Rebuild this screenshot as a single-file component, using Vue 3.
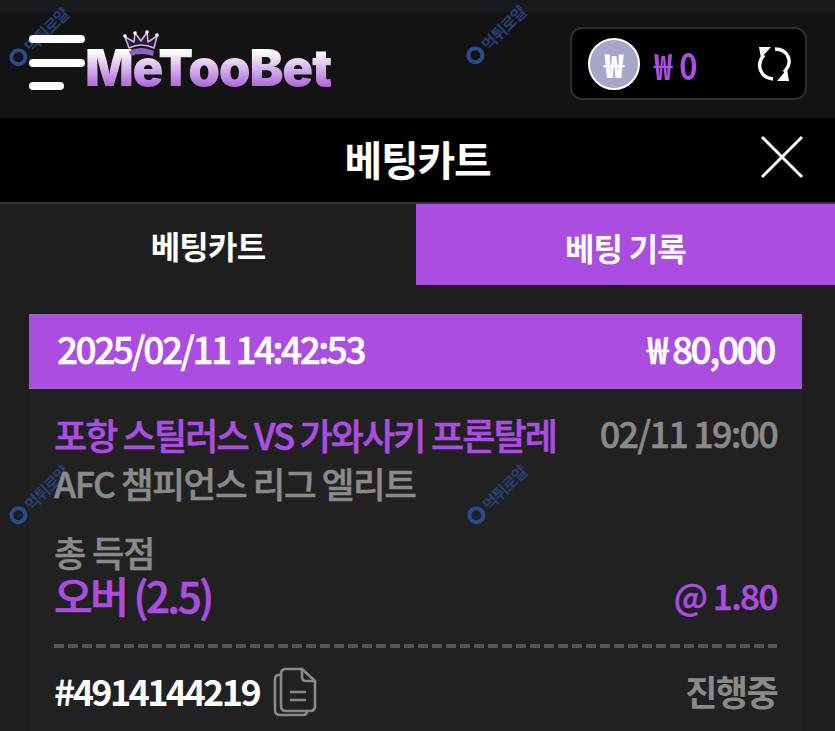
<template>
  <div class="page">
    <div class="topstrip"></div>
    <header class="header">
      <button class="menu" aria-label="menu">
        <span class="line"></span>
        <span class="line"></span>
        <span class="line short"></span>
      </button>
      <div class="logo">
        <svg class="crown" width="36" height="28" viewBox="0 0 36 28">
          <path d="M6 18 L2 7 L11 12 L12 3 L18 11 L24 2 L25 12 L34 6 L31 18 Q18 12 6 18Z" fill="#2a1a35" stroke="#c9b3e6" stroke-width="1.6" stroke-linejoin="round"/>
          <path d="M6 21 Q18 15 31 21 L30 26 Q18 22 8 26Z" fill="#8e5fc0"/>
          <circle cx="2" cy="6" r="1.8" fill="#fff"/>
          <circle cx="12" cy="3" r="1.8" fill="#fff"/>
          <circle cx="24" cy="2" r="1.8" fill="#fff"/>
          <circle cx="34" cy="5" r="1.8" fill="#fff"/>
        </svg>
        <span class="logotext">MeTooBet</span>
      </div>
      <div class="wallet">
        <span class="coin">₩</span>
        <span class="balance">₩ 0</span>
        <svg class="refresh" width="36" height="36" viewBox="0 0 36 36" fill="none" stroke="#fff" stroke-width="3.4">
          <path d="M8 9 C-1 19 5 32 17 33"/>
          <path d="M19 3 C32 3 38 16 28 26"/>
          <path d="M3 1 H15 L5 12Z" fill="#fff" stroke="none"/>
          <path d="M33 35 H21 L31 23Z" fill="#fff" stroke="none"/>
        </svg>
      </div>
    </header>

    <div class="titlebar">
      <span class="title">베팅카트</span>
      <svg class="close" width="44" height="44" viewBox="0 0 44 44" stroke="#fff" stroke-width="3">
        <path d="M2 2 L42 42 M42 2 L2 42"/>
      </svg>
    </div>

    <div class="tabs">
      <div class="tab first">베팅카트</div>
      <div class="tab active">베팅 기록</div>
    </div>

    <section class="card">
      <div class="cardhead">
        <span>2025/02/11 14:42:53</span>
        <span class="amount">₩ 80,000</span>
      </div>
      <div class="cardbody">
        <div class="row match">
          <span class="teams">포항 스틸러스 VS 가와사키 프론탈레</span>
          <span class="when">02/11 19:00</span>
        </div>
        <div class="league">AFC 챔피언스 리그 엘리트</div>
        <div class="market">총 득점</div>
        <div class="row pick">
          <span class="picktext">오버 (2.5)</span>
          <span class="odds">@ 1.80</span>
        </div>
        <div class="dash"></div>
        <div class="row foot">
          <div class="ticket">
            <span>#4914144219</span>
            <svg class="copy" width="44" height="50" viewBox="0 0 44 50" fill="none" stroke="#8a8a8a" stroke-width="2.6" stroke-linejoin="round" stroke-linecap="round">
              <path d="M8 8 H6 Q2 8 2 12 V43 Q2 48 7 48 H30 Q34 48 34 44"/>
              <path d="M8 7 Q8 2 13 2 H29 L42 14 V39 Q42 44 37 44 H13 Q8 44 8 39Z"/>
              <path d="M29 2 V10 Q29 14 33 14 H42"/>
              <path d="M18 25 H32 M18 33 H32"/>
            </svg>
          </div>
          <span class="status">진행중</span>
        </div>
      </div>
    </section>

    <div v-for="m in marks" :key="m.x + '-' + m.y" class="mark" :style="{ left: m.x + 'px', top: m.y + 'px' }">
      <i class="markdot"></i>먹튀로얄
    </div>
  </div>
</template>

<script setup>
const marks = [
  { x: 1, y: 25 },
  { x: 458, y: 23 },
  { x: 1, y: 483 },
  { x: 459, y: 483 },
]
</script>

<style>
html, body { margin: 0; background: #1e1e1f; }
</style>

<style scoped>
.page {
  position: relative;
  width: 835px;
  height: 731px;
  overflow: hidden;
  background: #1e1e1f;
  color: #fff;
  font-family: "Noto Sans CJK KR", "Noto Sans", sans-serif;
  display: flex;
  flex-direction: column;
}
.topstrip { height: 12px; background: #171b1e; flex: none; }
.header {
  height: 106px;
  flex: none;
  background: #131314;
  display: flex;
  align-items: center;
  padding: 0 28px 0 29px;
  box-sizing: border-box;
}
.menu {
  position: relative;
  z-index: 2;
  width: 56px;
  height: 55px;
  padding: 0;
  border: 0;
  background: none;
  display: flex;
  flex-direction: column;
  justify-content: space-between;
  margin-top: -5px;
}
.line { display: block; width: 56px; height: 8px; border-radius: 4px; background: #fff; }
.line.short { width: 35px; }
.logo { position: relative; margin-left: 0; margin-top: 6px; }
.logotext {
  display: block;
  font-family: "Inter", "Liberation Sans", sans-serif;
  font-weight: 900;
  font-size: 51px;
  line-height: 56px;
  letter-spacing: -1.2px;
  background: linear-gradient(#ffffff 20%, #a85ad8 88%);
  -webkit-background-clip: text;
  background-clip: text;
  color: transparent;
}
.crown { position: absolute; left: 38px; top: -10px; }
.wallet {
  margin-left: auto;
  width: 237px;
  height: 73px;
  box-sizing: border-box;
  background: #000;
  border: 2px solid #2e2e2e;
  border-radius: 12px;
  display: flex;
  align-items: center;
  padding: 0 13px 0 16px;
  margin-top: -3px;
}
.coin {
  width: 52px;
  height: 52px;
  box-sizing: border-box;
  border: 2px solid #fff;
  border-radius: 50%;
  background: #a6a6c8;
  color: #fff;
  font-weight: 900;
  font-size: 32px;
  display: flex;
  align-items: center;
  justify-content: center;
}
.balance {
  display: inline-block;
  margin-left: 14px;
  font-size: 36px;
  font-weight: 700;
  color: #ab4de0;
  letter-spacing: 0;
  transform: scaleX(.86);
  transform-origin: left center;
}
.refresh { margin-left: auto; }
.titlebar {
  position: relative;
  height: 84px;
  flex: none;
  background: #000;
  display: flex;
  align-items: center;
  justify-content: center;
  border-bottom: 2px solid #333;
}
.title { font-size: 41px; font-weight: 700; letter-spacing: -1.2px; margin-bottom: 4px; }
.close { position: absolute; right: 31px; top: 17px; }
.tabs { display: flex; height: 81px; flex: none; }
.tab {
  flex: 1;
  display: flex;
  align-items: center;
  justify-content: center;
  font-size: 32px;
  font-weight: 700;
  letter-spacing: -.8px;
  box-sizing: border-box;
}
.tab.first { flex: 0 0 416px; }
.tab.active { background: #ab4de0; padding-top: 4px; }
.card { flex: 1; margin: 29px 33px 0 29px; background: #212122; }
.cardhead {
  height: 75px;
  box-sizing: border-box;
  background: #ab4de0;
  border-top: 2px solid #9a62bd;
  border-bottom: 2px solid #9a62bd;
  display: flex;
  align-items: center;
  justify-content: space-between;
  padding: 0 28px 8px;
  font-size: 37px;
  font-weight: 500;
  letter-spacing: -2.5px;
  -webkit-text-stroke: .5px #fff;
}
.amount { letter-spacing: -2.4px; }
.cardbody { padding: 22px 25px 0; }
.row { display: flex; justify-content: space-between; align-items: center; }
.teams { font-size: 36px; line-height: 47px; font-weight: 500; color: #ab4de0; letter-spacing: -1.85px; -webkit-text-stroke: .6px #ab4de0; }
.when { font-size: 36px; line-height: 47px; font-weight: 500; color: #8a8a8a; letter-spacing: -1.8px; margin-top: -5px; -webkit-text-stroke: .5px #8a8a8a; }
.league { position: relative; z-index: 2; font-size: 35.5px; line-height: 50px; font-weight: 500; color: #8a8a8a; letter-spacing: -1.4px; -webkit-text-stroke: .5px #8a8a8a; }
.market { margin-top: 23px; font-size: 35px; line-height: 41px; font-weight: 500; color: #8a8a8a; letter-spacing: -1px; -webkit-text-stroke: .5px #8a8a8a; }
.picktext { font-size: 42px; line-height: 46px; font-weight: 500; color: #ab4de0; letter-spacing: -2.4px; -webkit-text-stroke: .7px #ab4de0; }
.odds { font-size: 35px; line-height: 46px; font-weight: 500; color: #ab4de0; letter-spacing: -1.5px; -webkit-text-stroke: .5px #ab4de0; }
.dash {
  margin-top: 26px;
  height: 4px;
  background: repeating-linear-gradient(90deg, #555 0 10px, transparent 10px 14px);
}
.foot { margin-top: 15px; }
.ticket { display: flex; align-items: center; gap: 14px; font-size: 36px; font-weight: 700; letter-spacing: -2.6px; }
.copy { margin-top: 4px; }
.status { font-size: 35px; font-weight: 700; color: #8a8a8a; letter-spacing: -1.6px; }
.mark {
  position: absolute;
  z-index: 1;
  display: flex;
  align-items: center;
  gap: 3px;
  font-size: 16px;
  font-weight: 700;
  letter-spacing: -1.2px;
  color: #26406f;
  transform: rotate(-45deg);
  white-space: nowrap;
  pointer-events: none;
}
.markdot {
  width: 10px;
  height: 10px;
  border: 4px solid #2a4b8f;
  border-radius: 50%;
}
</style>
